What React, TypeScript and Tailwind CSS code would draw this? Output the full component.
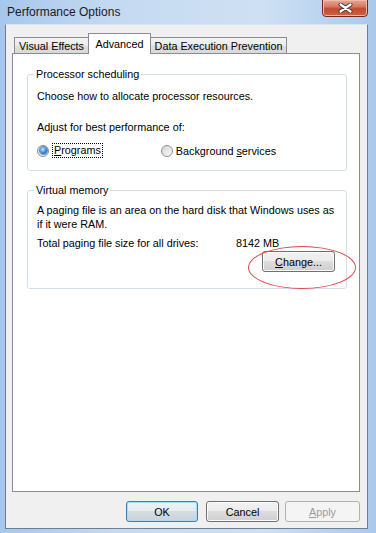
const Radio = ({ checked }: { checked?: boolean }) => (
  <span className="w-[12px] h-[12px] rounded-full border border-[#8e8f8f] bg-[linear-gradient(135deg,#d4d4d4,#fbfbfb)] flex items-center justify-center shrink-0">
    {checked && (
      <span className="w-[7px] h-[7px] rounded-full bg-[radial-gradient(circle_at_40%_35%,#c8ecff,#2b7ad3_60%,#0c4a94)] shadow-[0_0_0_1px_#5f8fc2]" />
    )}
  </span>
);

const Button = ({
  children,
  variant = 'normal',
  className = '',
}: {
  children: React.ReactNode;
  variant?: 'normal' | 'default' | 'disabled';
  className?: string;
}) => {
  const look =
    variant === 'default'
      ? 'border-[#3c7fb1] shadow-[inset_0_0_0_1px_#a9dcf6] bg-[linear-gradient(#eef2f5,#e6ebee_50%,#d6dde2_50%,#cad3da)] text-black'
      : variant === 'disabled'
        ? 'border-[#adb2b5] bg-[#f4f4f4] text-[#9b9b9b]'
        : 'border-[#707070] shadow-[inset_0_0_0_1px_#fbfbfb] bg-[linear-gradient(#f2f2f2,#ebebeb_50%,#dddddd_50%,#cfcfcf)] text-black';
  return (
    <div
      className={`h-[21px] rounded-[3px] border flex items-center justify-center ${look} ${className}`}
    >
      {children}
    </div>
  );
};

const GroupBox = ({
  title,
  className = '',
  children,
}: {
  title: string;
  className?: string;
  children: React.ReactNode;
}) => (
  <div className={`relative w-[320px] border border-[#d5dfe5] rounded-[3px] ${className}`}>
    <span className="absolute -top-[8px] left-[6px] px-[2px] bg-white leading-[14px]">{title}</span>
    {children}
  </div>
);

export default function App() {
  return (
    <div className="w-[376px] h-[533px] relative overflow-hidden bg-[linear-gradient(90deg,#a6c7ec,#c4daf1_30%,#cfe0f3_70%,#a9c9ec)] text-[10.8px] text-black font-['Liberation_Sans',Arial,sans-serif] leading-[14px]">
      {/* title bar */}
      <div className="h-[24px] flex items-center pl-[7px] text-[12px] text-[#1b1b1b]">Performance Options</div>

      {/* close button */}
      <div className="absolute left-[322px] -top-[1px] w-[46px] h-[18px] rounded-b-[4px] border border-[#6d2a20] bg-[linear-gradient(#e7a896,#d67a64_40%,#c24a30_55%,#d2603f)] shadow-[inset_0_0_0_1px_#f0b9a8] flex items-center justify-center">
        <svg width="15" height="10" viewBox="0 0 15 10">
          <path d="M2.5 1.5 L12.5 8.5 M12.5 1.5 L2.5 8.5" stroke="#3b3b3b" strokeWidth="4" strokeLinecap="round" />
          <path d="M2.5 1.5 L12.5 8.5 M12.5 1.5 L2.5 8.5" stroke="#ffffff" strokeWidth="2.2" strokeLinecap="round" />
        </svg>
      </div>

      {/* client area */}
      <div className="ml-[5px] mr-[8px] h-[505px] bg-[#f0f0f0] border border-[#6e7d91] border-t-[#dbe5ef] pl-[6px] pt-[8px] flex flex-col">
        {/* tabs */}
        <div className="flex items-end h-[20px] pl-[2px]">
          <div className="w-[74px] h-[16px] border-l border-t border-[#898c95] bg-[linear-gradient(#f3f3f3,#ebebeb_50%,#dedede_50%,#d9d9d9)] flex items-center justify-center">
            Visual Effects
          </div>
          <div className="relative z-10 w-[63px] h-[21px] -mb-[1px] border-l border-t border-r border-[#898c95] bg-white flex items-center justify-center pb-[1px]">
            Advanced
          </div>
          <div className="w-[136px] h-[16px] border-t border-r border-[#898c95] bg-[linear-gradient(#f3f3f3,#ebebeb_50%,#dedede_50%,#d9d9d9)] flex items-center justify-center">
            Data Execution Prevention
          </div>
        </div>

        {/* tab page */}
        <div className="w-[348px] h-[439px] bg-white border border-[#898c95] pl-[14px] pt-[20px] flex flex-col">
          <GroupBox title="Processor scheduling" className="h-[97px] pl-[9px] pt-[14px]">
            <div>Choose how to allocate processor resources.</div>
            <div className="mt-[17px]">Adjust for best performance of:</div>
            <div className="mt-[9px] flex items-center">
              <Radio checked />
              <span className="ml-[3px] px-[1px] border border-dotted border-black leading-[13px]">
                <span className="underline">P</span>rograms
              </span>
              <span className="ml-[58px]">
                <Radio />
              </span>
              <span className="ml-[3px]">
                Background <span className="underline">s</span>ervices
              </span>
            </div>
          </GroupBox>

          <GroupBox title="Virtual memory" className="mt-[19px] h-[99px] pl-[9px] pt-[12px]">
            <div>
              A paging file is an area on the hard disk that Windows uses as
              <br />
              if it were RAM.
            </div>
            <div className="mt-[5px] flex">
              <span className="w-[199px]">Total paging file size for all drives:</span>
              <span>8142 MB</span>
            </div>
            <div className="mt-[1px] flex justify-end pr-[11px]">
              <Button className="w-[73px] h-[20px]">
                <span>
                  <span className="underline">C</span>hange...
                </span>
              </Button>
            </div>
            {/* annotation ellipse */}
            <div className="absolute left-[220px] top-[55px] w-[108px] h-[43px] rounded-[50%] border border-[#e0474a]" />
          </GroupBox>
        </div>

        {/* dialog buttons */}
        <div className="mt-[9px] flex pl-[114px]">
          <Button variant="default" className="w-[72px]">
            OK
          </Button>
          <Button className="ml-[8px] w-[73px]">Cancel</Button>
          <Button variant="disabled" className="ml-[6px] w-[75px]">
            <span>
              <span className="underline">A</span>pply
            </span>
          </Button>
        </div>
      </div>
    </div>
  );
}
